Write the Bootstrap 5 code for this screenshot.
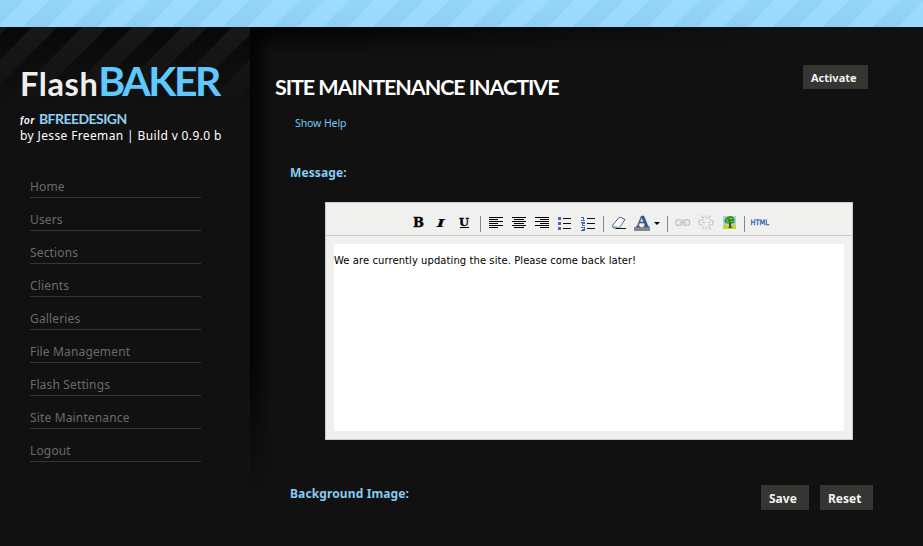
<!DOCTYPE html>
<html lang="en">
<head>
<meta charset="utf-8">
<meta name="viewport" content="width=device-width, initial-scale=1">
<title>FlashBaker - Site Maintenance</title>
<link href="https://cdn.jsdelivr.net/npm/bootstrap@5.3.0/dist/css/bootstrap.min.css" rel="stylesheet">
<style>
body{background:#111;color:#fff;font-family:"Noto Sans","Open Sans",sans-serif;font-size:12px;line-height:16px;height:546px;overflow:hidden}
a{text-decoration:none}
.topbar{height:27px;background:linear-gradient(rgba(160,222,255,.3),rgba(140,208,245,.12)),linear-gradient(135deg,#8ed0f5 25%,#9cdbff 25% 50%,#8ed0f5 50% 75%,#9cdbff 75%) 0 0/50px 50px}
.shell{height:519px}
.side{width:250px;flex:none;padding:33px 0 0 20px;background:linear-gradient(rgba(17,17,17,.1),#111 82px),linear-gradient(135deg,#080808 25%,#191919 25% 50%,#080808 50% 75%,#191919 75%) 8px 0/50px 50px}
.brand{font-family:Lato,sans-serif;font-weight:700;line-height:42px;height:42px;margin:0;white-space:nowrap}
.brand .fl{font-size:32.500px;color:#eee;letter-spacing:.6px}
.brand .bk{font-size:41px;color:#5fc8ff;letter-spacing:-2.500px}
.owner{margin-top:9px;height:16px;white-space:nowrap}
.owner i{font-family:Lato,sans-serif;font-weight:700;font-size:11px;letter-spacing:.6px}
.owner b{font-family:Lato,sans-serif;font-size:14px;color:#8ed0f5;margin-left:4px;letter-spacing:-.55px}
.build{white-space:nowrap;font-size:12px;letter-spacing:.37px;margin-top:1px}
.menu{margin:21px 0 0 10px;width:171px}
.menu a{height:33px;padding-top:14px;color:#6a6a6a;border-bottom:1px solid #353535;letter-spacing:.15px;line-height:16px}
.pane{padding:0 55px 0 25px;background:linear-gradient(to bottom,transparent 0 330px,#111 470px) 0 0/60px 100% no-repeat,linear-gradient(to right,#030303,rgba(17,17,17,0) 24px),linear-gradient(to right,transparent 40px,#111 540px) 0 0/100% 30px no-repeat,linear-gradient(to bottom,#020202,#111 26px)}
.head{padding-top:38px;height:85px}
.ttl{font-family:Lato,sans-serif;font-size:21.500px;font-weight:700;line-height:26px;margin:9px 0 0;letter-spacing:-1.070px}
.act{background:#353532;color:#f2f2f2;border:0;border-radius:0;font-weight:700;font-size:11px;line-height:16px;height:24px;padding:5px 8px 3px;text-align:left;white-space:nowrap}
.act-lg{font-size:12px;height:25px;padding-top:6px}
.help{font-size:10.500px;color:#74c7f0;margin-left:20px;height:16px;margin-top:3px;letter-spacing:-.1px}
.lbl{font-weight:700;color:#85ccf3;font-size:12px;line-height:18px;height:16px;margin:0 0 0 15px;white-space:nowrap;letter-spacing:.12px}
.lbl-msg{margin-top:33px}
.editor{width:528px;height:238px;margin:22px 0 0 50px;background:#f0f0ee;border:1px solid #ccc}
.tools{height:33px;border-bottom:1px solid #ccc}
.tools svg{display:block}
.area{margin:8px 8px 0 8px;height:187px;background:#fff;color:#000;font:10px/14px "DejaVu Sans",sans-serif;padding:10px 0 0;letter-spacing:.07px}
.foot{margin-top:45px}
.acts{margin-right:-5px;gap:11px}
.w-act{width:65px}.w-save{width:48px}.w-reset{width:53px}
</style>
<script src="https://cdn.jsdelivr.net/npm/bootstrap@5.3.0/dist/js/bootstrap.bundle.min.js"></script>
</head>
<body>
<header class="topbar"></header>
<div class="shell d-flex">
 <aside class="side">
  <h1 class="brand"><span class="fl">Flash</span><span class="bk">BAKER</span></h1>
  <div class="owner"><i>for</i><b>BFREEDESIGN</b></div>
  <div class="build">by Jesse Freeman | Build v 0.9.0 b</div>
  <nav class="menu d-flex flex-column">
   <a href="#"><span>Home</span></a><a href="#"><span>Users</span></a><a href="#"><span>Sections</span></a><a href="#"><span>Clients</span></a><a href="#"><span>Galleries</span></a><a href="#"><span>File Management</span></a><a href="#"><span>Flash Settings</span></a><a href="#"><span>Site Maintenance</span></a><a href="#"><span>Logout</span></a>
  </nav>
 </aside>
 <main class="pane flex-grow-1">
  <div class="head d-flex justify-content-between align-items-start">
   <h2 class="ttl"><span>SITE MAINTENANCE INACTIVE</span></h2>
   <button class="btn act w-act">Activate</button>
  </div>
  <div class="help"><span>Show Help</span></div>
  <div class="lbl lbl-msg"><span>Message:</span></div>
  <section class="editor">
   <div class="tools">
    <svg width="526" height="32" viewBox="326 203 526 32">
     <g font-family="DejaVu Serif,serif" font-weight="700" font-size="12" fill="#000" stroke="#000" stroke-width=".3">
      <text x="413" y="227" textLength="11" lengthAdjust="spacingAndGlyphs">B</text>
      <text x="436.500" y="227" font-style="italic" font-size="11.500" textLength="8.500" lengthAdjust="spacingAndGlyphs" stroke="none">I</text>
      <text x="459" y="226" font-size="11" textLength="10" lengthAdjust="spacingAndGlyphs">U</text>
     </g>
     <g shape-rendering="crispEdges">
      <path d="M460 227.500h9" stroke="#000"/>
      <path d="M480.500 216v16M603.500 216v16M667.500 216v16M744.500 216v16" stroke="#888"/>
      <path d="M489 217.500h14M489 219.500h9M489 221.500h14M489 223.500h9M489 225.500h14M489 227.500h9M512 217.500h14M514 219.500h10M512 221.500h14M514 223.500h10M512 225.500h14M514 227.500h10M535 217.500h14M540 219.500h9M535 221.500h14M540 223.500h9M535 225.500h14M540 227.500h9" stroke="#000"/>
      <path d="M563 218.500h8M563 223.500h8M563 228.500h8M587 218.500h8M587 223.500h8M587 228.500h8" stroke="#111"/>
      <path d="M558 217h3v3h-3zM558 222h3v3h-3zM558 227h3v3h-3z" fill="#4b65bd"/>
      <path d="M581 217.500h2v3M581 220.500h4M581 222.500h3v1h-2v2h3M581 227.500h3v3h-3M582 229h2" stroke="#4b65bd" fill="none"/>
     </g>
     <path d="M612.500 225.500L618.500 218Q620 216.500 622 218L625 219.500L619.500 227.500Q618 229 616 228.500L613 227.500Z" fill="#fff" stroke="#455b84"/>
     <path d="M613 225.500L619.500 227L625 220L619.500 228.500L614 228Z" fill="#9aafd0"/><path d="M616 228.500h10" stroke="#111"/>
     <path d="M634 227h16v4h-16z" fill="#888"/>
     <text x="636" y="226.500" font-family="Liberation Serif,serif" font-weight="700" font-size="17" fill="#34558e" stroke="#34558e" stroke-width=".4" textLength="13" lengthAdjust="spacingAndGlyphs">A</text>
     <path d="M654 222h6l-3 3z" fill="#000"/>
     <g fill="none" stroke="#c3c6cc" stroke-width="1.500">
      <rect x="676" y="219.800" width="6" height="5.500" rx="2"/><rect x="683.500" y="219.800" width="6" height="5.500" rx="2"/><path d="M679.500 222.600h7"/>
      <path d="M704 220h-3q-2 0-2 2.500t2 2.500h2M702 222.500h3M709 220h2q2 0 2 2.500t-2 2.500h-3M708 222.500h2M706 215.500v3M701 215.500l3 3M711 215.500l-3 3M706 226.500v3M702 229.500l2-3M711 229.500l-3-3" stroke-width="1.200"/>
     </g>
     <path d="M723 216h13v13h-13z" fill="#9ed4f4"/><path d="M723 225h13v4h-13z" fill="#c3da35"/>
     <path d="M726 218q1-2 3-1.500q2-1 4 .5q2 1.500 1.500 3q.5 3-2 3.500h-5q-3 0-3-2.500q-.5-2 1.500-3z" fill="#3a8c1c"/><path d="M725.500 220h2.500M729.500 218.500h3M726.500 222h2M731 221.500h2.500" stroke="#8ed236"/>
     <path d="M729 222.500h2l.3 4.500 1.700 1h-5l1-1z" fill="#6b4418"/>
     <text x="750.500" y="225" font-family="DejaVu Sans,sans-serif" font-size="7.500" fill="#2d61a8" stroke="#2d61a8" stroke-width=".3" textLength="18.500" lengthAdjust="spacingAndGlyphs">HTML</text>
    </svg>
   </div>
   <div class="area"><span>We are currently updating the site. Please come back later!</span></div>
  </section>
  <div class="foot d-flex align-items-start">
   <div class="lbl me-auto"><span>Background Image:</span></div>
   <div class="acts d-flex">
    <button class="btn act act-lg w-save">Save</button><button class="btn act act-lg w-reset">Reset</button>
   </div>
  </div>
 </main>
</div>
</body>
</html>
